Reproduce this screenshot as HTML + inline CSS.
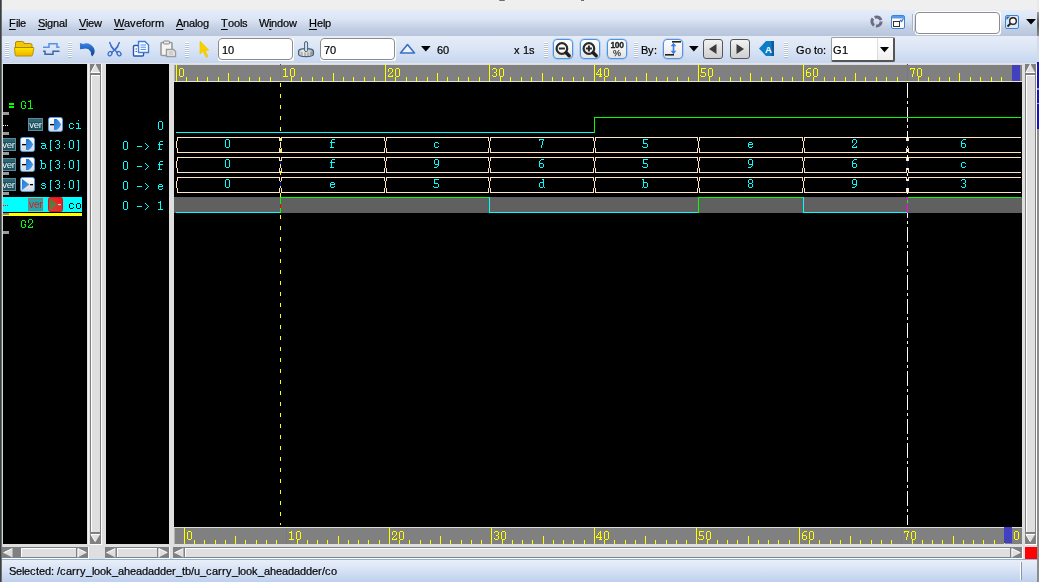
<!DOCTYPE html><html><head><meta charset="utf-8"><title>wave</title><style>
*{margin:0;padding:0;box-sizing:border-box}
html,body{width:1039px;height:582px;overflow:hidden;background:#efefef}
body{position:relative;font-family:"Liberation Sans",sans-serif;font-size:11px;color:#000}
.a{position:absolute}
.fx{will-change:transform;font-family:"Liberation Mono",monospace;font-size:14px;line-height:13px;white-space:pre;transform:scaleX(.8333);transform-origin:0 0}
.t{will-change:transform;position:absolute;white-space:pre;font-size:11px;line-height:13px;font-kerning:none;-webkit-text-stroke:0.2px #000}
.t i{display:inline-block;font-style:normal;overflow:visible}
.w2{width:2px}.w3{width:3px}.w4{width:4px}.w5{width:5px}.w6{width:6px}.w7{width:7px}.w8{width:8px}.w9{width:9px}.w10{width:10px}
.u{text-decoration:underline;text-underline-offset:2px}
.grip{position:absolute;width:4px;height:16px;background:repeating-linear-gradient(to bottom,#fff 0,#fff 1px,rgba(150,165,190,.55) 1px,rgba(150,165,190,.55) 2px)}
.inp{position:absolute;background:#fff;border:1px solid #9a9a9a;border-radius:3px;box-shadow:inset 1px 1px 0 #d0d0d0}
.btn{position:absolute;border:1px solid #4a94e4;border-radius:4px;background:linear-gradient(#ffffff,#f4f4f4 45%,#e4e4e4);box-shadow:0 0 0 0.5px rgba(74,148,228,.5)}
.gbtn{position:absolute;border:1px solid #555;border-radius:3px;background:linear-gradient(#f2f2f2,#cfcfcf)}
</style></head><body>
<div class="a" style="left:0;top:0;width:1039px;height:10px;background:#efefef"></div>
<div class="a" style="left:0;top:10px;width:1039px;height:26px;background:linear-gradient(#e4ecfa 0%,#dce5f5 35%,#c3cfe3 70%,#b7c5dc 100%)"></div>
<div class="a" style="left:0;top:36px;width:1039px;height:27px;background:linear-gradient(#e6edf8 0%,#dbe5f5 45%,#c6d6f0 100%)"></div>
<div class="a" style="left:0;top:63px;width:1039px;height:1px;background:#e4e4e4"></div>
<div class="a" style="left:0;top:64px;width:1039px;height:495px;background:#dfdfdf"></div>
<div class="a" style="left:0;top:559px;width:1039px;height:23px;background:linear-gradient(#e8eff9 0%,#d5e1f4 50%,#bdd0ee 100%);border-top:1px solid #8fb0e0"></div>
<div class="a" style="left:0;top:0;width:1px;height:582px;background:#3a3f3f"></div><div class="a" style="left:1px;top:0;width:1px;height:582px;background:#6a6f6f"></div>
<div class="a" style="left:2px;top:64px;width:1px;height:495px;background:#d6d6d6"></div>
<div class="a" style="left:88px;top:64px;width:1px;height:481px;background:#f2f2f2"></div>
<div class="a" style="left:1037px;top:0;width:2px;height:582px;background:#8c8c8c"></div>
<div class="a" style="left:1037px;top:0;width:2px;height:12px;background:#e8e8e8"></div><div class="a" style="left:1037px;top:12px;width:2px;height:24px;background:linear-gradient(#9c9c9c,#5a5a5a 50%,#8a8a8a)"></div>
<div class="a" style="left:1037px;top:36px;width:2px;height:27px;background:#d0dcee"></div>
<div class="a" style="left:1037px;top:62px;width:2px;height:67px;background:#1212c0"></div><div class="a" style="left:1037px;top:88px;width:2px;height:2px;background:#9090e8"></div><div class="a" style="left:1037px;top:103px;width:2px;height:1px;background:#9090e8"></div>
<div class="a" style="left:3px;top:64px;width:84px;height:480px;background:#000"></div>
<div class="a" style="left:106px;top:64px;width:63px;height:480px;background:#000"></div>
<div class="a" style="left:174px;top:64px;width:848px;height:480px;background:#000"></div>
<div class="a" style="left:90px;top:64px;width:11px;height:480px;background:#808080"></div>
<div class="a" style="left:101px;top:64px;width:1px;height:481px;background:#fff"></div>
<div class="a" style="left:90px;top:544px;width:12px;height:1px;background:#fff"></div>
<svg class="a" style="left:90px;top:64px" width="11" height="9"><path d="M5.5 0 L10.3 9 L0.7 9 Z" fill="#dfdfdf"/><path d="M5.5 0 L0.9 8.6 L10 8.6" stroke="#fff" stroke-width="1" fill="none"/></svg>
<svg class="a" style="left:90px;top:534px" width="11" height="8"><path d="M0.7 0 L10.3 0 L5.5 8 Z" fill="#dfdfdf"/><path d="M10 0.5 L1 0.5 L5.2 7.6" stroke="#fff" stroke-width="1" fill="none"/></svg>
<div class="a" style="left:91px;top:75px;width:9px;height:457px;background:#dfdfdf;border-left:1px solid #fff;border-top:1px solid #fff"></div>
<div class="a" style="left:1025px;top:64px;width:11px;height:480px;background:#808080"></div>
<div class="a" style="left:1036px;top:64px;width:1px;height:481px;background:#fff"></div>
<div class="a" style="left:1025px;top:544px;width:12px;height:1px;background:#fff"></div>
<svg class="a" style="left:1025px;top:64px" width="11" height="9"><path d="M5.5 0 L10.3 9 L0.7 9 Z" fill="#dfdfdf"/><path d="M5.5 0 L0.9 8.6 L10 8.6" stroke="#fff" stroke-width="1" fill="none"/></svg>
<svg class="a" style="left:1025px;top:534px" width="11" height="8"><path d="M0.7 0 L10.3 0 L5.5 8 Z" fill="#dfdfdf"/><path d="M10 0.5 L1 0.5 L5.2 7.6" stroke="#fff" stroke-width="1" fill="none"/></svg>
<div class="a" style="left:1026px;top:75px;width:9px;height:457px;background:#dfdfdf;border-left:1px solid #fff;border-top:1px solid #fff"></div>
<div class="a" style="left:2px;top:547px;width:86px;height:11px;background:#808080"></div>
<div class="a" style="left:2px;top:558px;width:87px;height:1px;background:#fff"></div>
<div class="a" style="left:88px;top:547px;width:1px;height:11px;background:#fff"></div>
<svg class="a" style="left:3px;top:548px" width="10" height="10"><path d="M0.3 4.8 L9.5 0.2 L9.5 9.5 Z" fill="#dfdfdf"/><path d="M0.5 4.8 L9.2 0.6" stroke="#fff" stroke-width="1" fill="none"/></svg>
<svg class="a" style="left:77px;top:548px" width="10" height="10"><path d="M0.5 0.2 L9.7 4.8 L0.5 9.5 Z" fill="#dfdfdf"/><path d="M9.2 4.6 L1 0.6 L1 9.3" stroke="#fff" stroke-width="1" fill="none"/></svg>
<div class="a" style="left:21px;top:548px;width:55px;height:9px;background:#dfdfdf;border-left:1px solid #fff;border-top:1px solid #fff"></div>
<div class="a" style="left:105px;top:547px;width:64px;height:11px;background:#808080"></div>
<div class="a" style="left:105px;top:558px;width:65px;height:1px;background:#fff"></div>
<div class="a" style="left:169px;top:547px;width:1px;height:11px;background:#fff"></div>
<svg class="a" style="left:106px;top:548px" width="10" height="10"><path d="M0.3 4.8 L9.5 0.2 L9.5 9.5 Z" fill="#dfdfdf"/><path d="M0.5 4.8 L9.2 0.6" stroke="#fff" stroke-width="1" fill="none"/></svg>
<svg class="a" style="left:158px;top:548px" width="10" height="10"><path d="M0.5 0.2 L9.7 4.8 L0.5 9.5 Z" fill="#dfdfdf"/><path d="M9.2 4.6 L1 0.6 L1 9.3" stroke="#fff" stroke-width="1" fill="none"/></svg>
<div class="a" style="left:117px;top:548px;width:40px;height:9px;background:#dfdfdf;border-left:1px solid #fff;border-top:1px solid #fff"></div>
<div class="a" style="left:173px;top:547px;width:849px;height:11px;background:#808080"></div>
<div class="a" style="left:173px;top:558px;width:850px;height:1px;background:#fff"></div>
<div class="a" style="left:1022px;top:547px;width:1px;height:11px;background:#fff"></div>
<svg class="a" style="left:174px;top:548px" width="10" height="10"><path d="M0.3 4.8 L9.5 0.2 L9.5 9.5 Z" fill="#dfdfdf"/><path d="M0.5 4.8 L9.2 0.6" stroke="#fff" stroke-width="1" fill="none"/></svg>
<svg class="a" style="left:1011px;top:548px" width="10" height="10"><path d="M0.5 0.2 L9.7 4.8 L0.5 9.5 Z" fill="#dfdfdf"/><path d="M9.2 4.6 L1 0.6 L1 9.3" stroke="#fff" stroke-width="1" fill="none"/></svg>
<div class="a" style="left:185px;top:548px;width:825px;height:9px;background:#dfdfdf;border-left:1px solid #fff;border-top:1px solid #fff"></div>
<div class="a" style="left:1025px;top:547px;width:12px;height:12px;background:#ff0000"></div>
<svg class="a" style="left:0;top:0" width="1039" height="582" shape-rendering="crispEdges"><rect x="174" y="64" width="848" height="1" fill="#dcdcdc"/><rect x="175" y="65" width="847" height="16" fill="#808080"/><rect x="174" y="65" width="1" height="16" fill="#b0b0b0"/><rect x="174" y="81" width="848" height="1" fill="#e0e0e0"/><rect x="174" y="527" width="848" height="1" fill="#dcdcdc"/><rect x="175" y="528" width="847" height="16" fill="#808080"/><rect x="174" y="528" width="1" height="16" fill="#b0b0b0"/><rect x="174" y="544" width="848" height="1" fill="#e0e0e0"/><rect x="176" y="64" width="1" height="18" fill="#ffff00"/><rect x="186" y="77" width="1" height="5" fill="#ffff00"/><rect x="197" y="77" width="1" height="5" fill="#ffff00"/><rect x="207" y="77" width="1" height="5" fill="#ffff00"/><rect x="218" y="77" width="1" height="5" fill="#ffff00"/><rect x="228" y="73" width="1" height="9" fill="#ffff00"/><rect x="238" y="77" width="1" height="5" fill="#ffff00"/><rect x="249" y="77" width="1" height="5" fill="#ffff00"/><rect x="259" y="77" width="1" height="5" fill="#ffff00"/><rect x="270" y="77" width="1" height="5" fill="#ffff00"/><rect x="280" y="64" width="1" height="1" fill="#505050"/><rect x="280" y="65" width="1" height="16" fill="#797979"/><rect x="280" y="81" width="1" height="1" fill="#ffff00"/><rect x="291" y="77" width="1" height="5" fill="#ffff00"/><rect x="301" y="77" width="1" height="5" fill="#ffff00"/><rect x="312" y="77" width="1" height="5" fill="#ffff00"/><rect x="322" y="77" width="1" height="5" fill="#ffff00"/><rect x="333" y="73" width="1" height="9" fill="#ffff00"/><rect x="343" y="77" width="1" height="5" fill="#ffff00"/><rect x="353" y="77" width="1" height="5" fill="#ffff00"/><rect x="364" y="77" width="1" height="5" fill="#ffff00"/><rect x="374" y="77" width="1" height="5" fill="#ffff00"/><rect x="385" y="64" width="1" height="18" fill="#ffff00"/><rect x="395" y="77" width="1" height="5" fill="#ffff00"/><rect x="406" y="77" width="1" height="5" fill="#ffff00"/><rect x="416" y="77" width="1" height="5" fill="#ffff00"/><rect x="427" y="77" width="1" height="5" fill="#ffff00"/><rect x="437" y="73" width="1" height="9" fill="#ffff00"/><rect x="447" y="77" width="1" height="5" fill="#ffff00"/><rect x="458" y="77" width="1" height="5" fill="#ffff00"/><rect x="468" y="77" width="1" height="5" fill="#ffff00"/><rect x="479" y="77" width="1" height="5" fill="#ffff00"/><rect x="489" y="64" width="1" height="18" fill="#ffff00"/><rect x="500" y="77" width="1" height="5" fill="#ffff00"/><rect x="510" y="77" width="1" height="5" fill="#ffff00"/><rect x="521" y="77" width="1" height="5" fill="#ffff00"/><rect x="531" y="77" width="1" height="5" fill="#ffff00"/><rect x="542" y="73" width="1" height="9" fill="#ffff00"/><rect x="552" y="77" width="1" height="5" fill="#ffff00"/><rect x="562" y="77" width="1" height="5" fill="#ffff00"/><rect x="573" y="77" width="1" height="5" fill="#ffff00"/><rect x="583" y="77" width="1" height="5" fill="#ffff00"/><rect x="594" y="64" width="1" height="18" fill="#ffff00"/><rect x="604" y="77" width="1" height="5" fill="#ffff00"/><rect x="615" y="77" width="1" height="5" fill="#ffff00"/><rect x="625" y="77" width="1" height="5" fill="#ffff00"/><rect x="636" y="77" width="1" height="5" fill="#ffff00"/><rect x="646" y="73" width="1" height="9" fill="#ffff00"/><rect x="656" y="77" width="1" height="5" fill="#ffff00"/><rect x="667" y="77" width="1" height="5" fill="#ffff00"/><rect x="677" y="77" width="1" height="5" fill="#ffff00"/><rect x="688" y="77" width="1" height="5" fill="#ffff00"/><rect x="698" y="64" width="1" height="18" fill="#ffff00"/><rect x="709" y="77" width="1" height="5" fill="#ffff00"/><rect x="719" y="77" width="1" height="5" fill="#ffff00"/><rect x="730" y="77" width="1" height="5" fill="#ffff00"/><rect x="740" y="77" width="1" height="5" fill="#ffff00"/><rect x="750" y="73" width="1" height="9" fill="#ffff00"/><rect x="761" y="77" width="1" height="5" fill="#ffff00"/><rect x="771" y="77" width="1" height="5" fill="#ffff00"/><rect x="782" y="77" width="1" height="5" fill="#ffff00"/><rect x="792" y="77" width="1" height="5" fill="#ffff00"/><rect x="803" y="64" width="1" height="18" fill="#ffff00"/><rect x="813" y="77" width="1" height="5" fill="#ffff00"/><rect x="824" y="77" width="1" height="5" fill="#ffff00"/><rect x="834" y="77" width="1" height="5" fill="#ffff00"/><rect x="845" y="77" width="1" height="5" fill="#ffff00"/><rect x="855" y="73" width="1" height="9" fill="#ffff00"/><rect x="865" y="77" width="1" height="5" fill="#ffff00"/><rect x="876" y="77" width="1" height="5" fill="#ffff00"/><rect x="886" y="77" width="1" height="5" fill="#ffff00"/><rect x="897" y="77" width="1" height="5" fill="#ffff00"/><rect x="907" y="64" width="1" height="1" fill="#505050"/><rect x="907" y="65" width="1" height="16" fill="#797979"/><rect x="907" y="81" width="1" height="1" fill="#ffff00"/><rect x="918" y="77" width="1" height="5" fill="#ffff00"/><rect x="928" y="77" width="1" height="5" fill="#ffff00"/><rect x="939" y="77" width="1" height="5" fill="#ffff00"/><rect x="949" y="77" width="1" height="5" fill="#ffff00"/><rect x="959" y="73" width="1" height="9" fill="#ffff00"/><rect x="970" y="77" width="1" height="5" fill="#ffff00"/><rect x="980" y="77" width="1" height="5" fill="#ffff00"/><rect x="991" y="77" width="1" height="5" fill="#ffff00"/><rect x="1001" y="77" width="1" height="5" fill="#ffff00"/><rect x="184" y="527" width="1" height="17" fill="#ffff00"/><rect x="194" y="540" width="1" height="4" fill="#ffff00"/><rect x="204" y="540" width="1" height="4" fill="#ffff00"/><rect x="215" y="540" width="1" height="4" fill="#ffff00"/><rect x="225" y="540" width="1" height="4" fill="#ffff00"/><rect x="235" y="536" width="1" height="8" fill="#ffff00"/><rect x="245" y="540" width="1" height="4" fill="#ffff00"/><rect x="256" y="540" width="1" height="4" fill="#ffff00"/><rect x="266" y="540" width="1" height="4" fill="#ffff00"/><rect x="276" y="540" width="1" height="4" fill="#ffff00"/><rect x="286" y="527" width="1" height="1" fill="#ffff00"/><rect x="286" y="528" width="1" height="16" fill="#7a7a7a"/><rect x="297" y="540" width="1" height="4" fill="#ffff00"/><rect x="307" y="540" width="1" height="4" fill="#ffff00"/><rect x="317" y="540" width="1" height="4" fill="#ffff00"/><rect x="327" y="540" width="1" height="4" fill="#ffff00"/><rect x="338" y="536" width="1" height="8" fill="#ffff00"/><rect x="348" y="540" width="1" height="4" fill="#ffff00"/><rect x="358" y="540" width="1" height="4" fill="#ffff00"/><rect x="368" y="540" width="1" height="4" fill="#ffff00"/><rect x="379" y="540" width="1" height="4" fill="#ffff00"/><rect x="389" y="527" width="1" height="17" fill="#ffff00"/><rect x="399" y="540" width="1" height="4" fill="#ffff00"/><rect x="409" y="540" width="1" height="4" fill="#ffff00"/><rect x="420" y="540" width="1" height="4" fill="#ffff00"/><rect x="430" y="540" width="1" height="4" fill="#ffff00"/><rect x="440" y="536" width="1" height="8" fill="#ffff00"/><rect x="450" y="540" width="1" height="4" fill="#ffff00"/><rect x="461" y="540" width="1" height="4" fill="#ffff00"/><rect x="471" y="540" width="1" height="4" fill="#ffff00"/><rect x="481" y="540" width="1" height="4" fill="#ffff00"/><rect x="491" y="527" width="1" height="17" fill="#ffff00"/><rect x="502" y="540" width="1" height="4" fill="#ffff00"/><rect x="512" y="540" width="1" height="4" fill="#ffff00"/><rect x="522" y="540" width="1" height="4" fill="#ffff00"/><rect x="532" y="540" width="1" height="4" fill="#ffff00"/><rect x="543" y="536" width="1" height="8" fill="#ffff00"/><rect x="553" y="540" width="1" height="4" fill="#ffff00"/><rect x="563" y="540" width="1" height="4" fill="#ffff00"/><rect x="573" y="540" width="1" height="4" fill="#ffff00"/><rect x="584" y="540" width="1" height="4" fill="#ffff00"/><rect x="594" y="527" width="1" height="17" fill="#ffff00"/><rect x="604" y="540" width="1" height="4" fill="#ffff00"/><rect x="614" y="540" width="1" height="4" fill="#ffff00"/><rect x="625" y="540" width="1" height="4" fill="#ffff00"/><rect x="635" y="540" width="1" height="4" fill="#ffff00"/><rect x="645" y="536" width="1" height="8" fill="#ffff00"/><rect x="655" y="540" width="1" height="4" fill="#ffff00"/><rect x="666" y="540" width="1" height="4" fill="#ffff00"/><rect x="676" y="540" width="1" height="4" fill="#ffff00"/><rect x="686" y="540" width="1" height="4" fill="#ffff00"/><rect x="696" y="527" width="1" height="17" fill="#ffff00"/><rect x="707" y="540" width="1" height="4" fill="#ffff00"/><rect x="717" y="540" width="1" height="4" fill="#ffff00"/><rect x="727" y="540" width="1" height="4" fill="#ffff00"/><rect x="737" y="540" width="1" height="4" fill="#ffff00"/><rect x="748" y="536" width="1" height="8" fill="#ffff00"/><rect x="758" y="540" width="1" height="4" fill="#ffff00"/><rect x="768" y="540" width="1" height="4" fill="#ffff00"/><rect x="778" y="540" width="1" height="4" fill="#ffff00"/><rect x="789" y="540" width="1" height="4" fill="#ffff00"/><rect x="799" y="527" width="1" height="17" fill="#ffff00"/><rect x="809" y="540" width="1" height="4" fill="#ffff00"/><rect x="819" y="540" width="1" height="4" fill="#ffff00"/><rect x="830" y="540" width="1" height="4" fill="#ffff00"/><rect x="840" y="540" width="1" height="4" fill="#ffff00"/><rect x="850" y="536" width="1" height="8" fill="#ffff00"/><rect x="860" y="540" width="1" height="4" fill="#ffff00"/><rect x="871" y="540" width="1" height="4" fill="#ffff00"/><rect x="881" y="540" width="1" height="4" fill="#ffff00"/><rect x="891" y="540" width="1" height="4" fill="#ffff00"/><rect x="901" y="527" width="1" height="1" fill="#ffff00"/><rect x="901" y="528" width="1" height="16" fill="#7a7a7a"/><rect x="912" y="540" width="1" height="4" fill="#ffff00"/><rect x="922" y="540" width="1" height="4" fill="#ffff00"/><rect x="932" y="540" width="1" height="4" fill="#ffff00"/><rect x="942" y="540" width="1" height="4" fill="#ffff00"/><rect x="953" y="536" width="1" height="8" fill="#ffff00"/><rect x="963" y="540" width="1" height="4" fill="#ffff00"/><rect x="973" y="540" width="1" height="4" fill="#ffff00"/><rect x="983" y="540" width="1" height="4" fill="#ffff00"/><rect x="994" y="540" width="1" height="4" fill="#ffff00"/><rect x="1012" y="65" width="8" height="16" fill="#4040c0"/><rect x="1012" y="64" width="1" height="1" fill="#ffff00"/><rect x="1012" y="81" width="1" height="1" fill="#ffff00"/><rect x="1004" y="527" width="8" height="16" fill="#4040c0"/><rect x="1004" y="543" width="1" height="1" fill="#ffff00"/><rect x="174" y="197" width="848" height="16" fill="#606060"/><rect x="176" y="132" width="419" height="1" fill="#00ffff"/><rect x="594" y="117" width="1" height="16" fill="#00ff00"/><rect x="594" y="117" width="427" height="1" fill="#00ff00"/><rect x="176" y="212" width="105" height="1" fill="#00ffff"/><rect x="280" y="197" width="210" height="1" fill="#00ff00"/><rect x="280" y="197" width="1" height="16" fill="#00ff00"/><rect x="489" y="212" width="210" height="1" fill="#00ffff"/><rect x="489" y="197" width="1" height="16" fill="#00ffff"/><rect x="698" y="197" width="106" height="1" fill="#00ff00"/><rect x="698" y="197" width="1" height="16" fill="#00ff00"/><rect x="803" y="212" width="105" height="1" fill="#00ffff"/><rect x="803" y="197" width="1" height="16" fill="#00ffff"/><rect x="907" y="197" width="114" height="1" fill="#00ff00"/><rect x="907" y="197" width="1" height="16" fill="#00ff00"/><rect x="176" y="141" width="1" height="7" fill="#ffe4c4"/><rect x="177" y="137" width="1" height="4" fill="#ffe4c4"/><rect x="177" y="148" width="1" height="5" fill="#ffe4c4"/><rect x="177" y="137" width="103" height="1" fill="#ffe4c4"/><rect x="177" y="152" width="103" height="1" fill="#ffe4c4"/><rect x="279" y="137" width="1" height="4" fill="#ffe4c4"/><rect x="279" y="148" width="1" height="5" fill="#ffe4c4"/><rect x="280" y="141" width="1" height="7" fill="#ffe4c4"/><rect x="281" y="137" width="1" height="4" fill="#ffe4c4"/><rect x="281" y="148" width="1" height="5" fill="#ffe4c4"/><rect x="281" y="137" width="104" height="1" fill="#ffe4c4"/><rect x="281" y="152" width="104" height="1" fill="#ffe4c4"/><rect x="384" y="137" width="1" height="4" fill="#ffe4c4"/><rect x="384" y="148" width="1" height="5" fill="#ffe4c4"/><rect x="385" y="141" width="1" height="7" fill="#ffe4c4"/><rect x="386" y="137" width="1" height="4" fill="#ffe4c4"/><rect x="386" y="148" width="1" height="5" fill="#ffe4c4"/><rect x="386" y="137" width="103" height="1" fill="#ffe4c4"/><rect x="386" y="152" width="103" height="1" fill="#ffe4c4"/><rect x="488" y="137" width="1" height="4" fill="#ffe4c4"/><rect x="488" y="148" width="1" height="5" fill="#ffe4c4"/><rect x="489" y="141" width="1" height="7" fill="#ffe4c4"/><rect x="490" y="137" width="1" height="4" fill="#ffe4c4"/><rect x="490" y="148" width="1" height="5" fill="#ffe4c4"/><rect x="490" y="137" width="104" height="1" fill="#ffe4c4"/><rect x="490" y="152" width="104" height="1" fill="#ffe4c4"/><rect x="593" y="137" width="1" height="4" fill="#ffe4c4"/><rect x="593" y="148" width="1" height="5" fill="#ffe4c4"/><rect x="594" y="141" width="1" height="7" fill="#ffe4c4"/><rect x="595" y="137" width="1" height="4" fill="#ffe4c4"/><rect x="595" y="148" width="1" height="5" fill="#ffe4c4"/><rect x="595" y="137" width="103" height="1" fill="#ffe4c4"/><rect x="595" y="152" width="103" height="1" fill="#ffe4c4"/><rect x="697" y="137" width="1" height="4" fill="#ffe4c4"/><rect x="697" y="148" width="1" height="5" fill="#ffe4c4"/><rect x="698" y="141" width="1" height="7" fill="#ffe4c4"/><rect x="699" y="137" width="1" height="4" fill="#ffe4c4"/><rect x="699" y="148" width="1" height="5" fill="#ffe4c4"/><rect x="699" y="137" width="104" height="1" fill="#ffe4c4"/><rect x="699" y="152" width="104" height="1" fill="#ffe4c4"/><rect x="802" y="137" width="1" height="4" fill="#ffe4c4"/><rect x="802" y="148" width="1" height="5" fill="#ffe4c4"/><rect x="803" y="141" width="1" height="7" fill="#ffe4c4"/><rect x="804" y="137" width="1" height="4" fill="#ffe4c4"/><rect x="804" y="148" width="1" height="5" fill="#ffe4c4"/><rect x="804" y="137" width="103" height="1" fill="#ffe4c4"/><rect x="804" y="152" width="103" height="1" fill="#ffe4c4"/><rect x="906" y="137" width="1" height="4" fill="#ffe4c4"/><rect x="906" y="148" width="1" height="5" fill="#ffe4c4"/><rect x="907" y="141" width="1" height="7" fill="#ffe4c4"/><rect x="908" y="137" width="1" height="4" fill="#ffe4c4"/><rect x="908" y="148" width="1" height="5" fill="#ffe4c4"/><rect x="908" y="137" width="113" height="1" fill="#ffe4c4"/><rect x="908" y="152" width="113" height="1" fill="#ffe4c4"/><rect x="176" y="161" width="1" height="7" fill="#ffe4c4"/><rect x="177" y="157" width="1" height="4" fill="#ffe4c4"/><rect x="177" y="168" width="1" height="5" fill="#ffe4c4"/><rect x="177" y="157" width="103" height="1" fill="#ffe4c4"/><rect x="177" y="172" width="103" height="1" fill="#ffe4c4"/><rect x="279" y="157" width="1" height="4" fill="#ffe4c4"/><rect x="279" y="168" width="1" height="5" fill="#ffe4c4"/><rect x="280" y="161" width="1" height="7" fill="#ffe4c4"/><rect x="281" y="157" width="1" height="4" fill="#ffe4c4"/><rect x="281" y="168" width="1" height="5" fill="#ffe4c4"/><rect x="281" y="157" width="104" height="1" fill="#ffe4c4"/><rect x="281" y="172" width="104" height="1" fill="#ffe4c4"/><rect x="384" y="157" width="1" height="4" fill="#ffe4c4"/><rect x="384" y="168" width="1" height="5" fill="#ffe4c4"/><rect x="385" y="161" width="1" height="7" fill="#ffe4c4"/><rect x="386" y="157" width="1" height="4" fill="#ffe4c4"/><rect x="386" y="168" width="1" height="5" fill="#ffe4c4"/><rect x="386" y="157" width="103" height="1" fill="#ffe4c4"/><rect x="386" y="172" width="103" height="1" fill="#ffe4c4"/><rect x="488" y="157" width="1" height="4" fill="#ffe4c4"/><rect x="488" y="168" width="1" height="5" fill="#ffe4c4"/><rect x="489" y="161" width="1" height="7" fill="#ffe4c4"/><rect x="490" y="157" width="1" height="4" fill="#ffe4c4"/><rect x="490" y="168" width="1" height="5" fill="#ffe4c4"/><rect x="490" y="157" width="104" height="1" fill="#ffe4c4"/><rect x="490" y="172" width="104" height="1" fill="#ffe4c4"/><rect x="593" y="157" width="1" height="4" fill="#ffe4c4"/><rect x="593" y="168" width="1" height="5" fill="#ffe4c4"/><rect x="594" y="161" width="1" height="7" fill="#ffe4c4"/><rect x="595" y="157" width="1" height="4" fill="#ffe4c4"/><rect x="595" y="168" width="1" height="5" fill="#ffe4c4"/><rect x="595" y="157" width="103" height="1" fill="#ffe4c4"/><rect x="595" y="172" width="103" height="1" fill="#ffe4c4"/><rect x="697" y="157" width="1" height="4" fill="#ffe4c4"/><rect x="697" y="168" width="1" height="5" fill="#ffe4c4"/><rect x="698" y="161" width="1" height="7" fill="#ffe4c4"/><rect x="699" y="157" width="1" height="4" fill="#ffe4c4"/><rect x="699" y="168" width="1" height="5" fill="#ffe4c4"/><rect x="699" y="157" width="104" height="1" fill="#ffe4c4"/><rect x="699" y="172" width="104" height="1" fill="#ffe4c4"/><rect x="802" y="157" width="1" height="4" fill="#ffe4c4"/><rect x="802" y="168" width="1" height="5" fill="#ffe4c4"/><rect x="803" y="161" width="1" height="7" fill="#ffe4c4"/><rect x="804" y="157" width="1" height="4" fill="#ffe4c4"/><rect x="804" y="168" width="1" height="5" fill="#ffe4c4"/><rect x="804" y="157" width="103" height="1" fill="#ffe4c4"/><rect x="804" y="172" width="103" height="1" fill="#ffe4c4"/><rect x="906" y="157" width="1" height="4" fill="#ffe4c4"/><rect x="906" y="168" width="1" height="5" fill="#ffe4c4"/><rect x="907" y="161" width="1" height="7" fill="#ffe4c4"/><rect x="908" y="157" width="1" height="4" fill="#ffe4c4"/><rect x="908" y="168" width="1" height="5" fill="#ffe4c4"/><rect x="908" y="157" width="113" height="1" fill="#ffe4c4"/><rect x="908" y="172" width="113" height="1" fill="#ffe4c4"/><rect x="176" y="181" width="1" height="7" fill="#ffe4c4"/><rect x="177" y="177" width="1" height="4" fill="#ffe4c4"/><rect x="177" y="188" width="1" height="5" fill="#ffe4c4"/><rect x="177" y="177" width="103" height="1" fill="#ffe4c4"/><rect x="177" y="192" width="103" height="1" fill="#ffe4c4"/><rect x="279" y="177" width="1" height="4" fill="#ffe4c4"/><rect x="279" y="188" width="1" height="5" fill="#ffe4c4"/><rect x="280" y="181" width="1" height="7" fill="#ffe4c4"/><rect x="281" y="177" width="1" height="4" fill="#ffe4c4"/><rect x="281" y="188" width="1" height="5" fill="#ffe4c4"/><rect x="281" y="177" width="104" height="1" fill="#ffe4c4"/><rect x="281" y="192" width="104" height="1" fill="#ffe4c4"/><rect x="384" y="177" width="1" height="4" fill="#ffe4c4"/><rect x="384" y="188" width="1" height="5" fill="#ffe4c4"/><rect x="385" y="181" width="1" height="7" fill="#ffe4c4"/><rect x="386" y="177" width="1" height="4" fill="#ffe4c4"/><rect x="386" y="188" width="1" height="5" fill="#ffe4c4"/><rect x="386" y="177" width="103" height="1" fill="#ffe4c4"/><rect x="386" y="192" width="103" height="1" fill="#ffe4c4"/><rect x="488" y="177" width="1" height="4" fill="#ffe4c4"/><rect x="488" y="188" width="1" height="5" fill="#ffe4c4"/><rect x="489" y="181" width="1" height="7" fill="#ffe4c4"/><rect x="490" y="177" width="1" height="4" fill="#ffe4c4"/><rect x="490" y="188" width="1" height="5" fill="#ffe4c4"/><rect x="490" y="177" width="104" height="1" fill="#ffe4c4"/><rect x="490" y="192" width="104" height="1" fill="#ffe4c4"/><rect x="593" y="177" width="1" height="4" fill="#ffe4c4"/><rect x="593" y="188" width="1" height="5" fill="#ffe4c4"/><rect x="594" y="181" width="1" height="7" fill="#ffe4c4"/><rect x="595" y="177" width="1" height="4" fill="#ffe4c4"/><rect x="595" y="188" width="1" height="5" fill="#ffe4c4"/><rect x="595" y="177" width="103" height="1" fill="#ffe4c4"/><rect x="595" y="192" width="103" height="1" fill="#ffe4c4"/><rect x="697" y="177" width="1" height="4" fill="#ffe4c4"/><rect x="697" y="188" width="1" height="5" fill="#ffe4c4"/><rect x="698" y="181" width="1" height="7" fill="#ffe4c4"/><rect x="699" y="177" width="1" height="4" fill="#ffe4c4"/><rect x="699" y="188" width="1" height="5" fill="#ffe4c4"/><rect x="699" y="177" width="104" height="1" fill="#ffe4c4"/><rect x="699" y="192" width="104" height="1" fill="#ffe4c4"/><rect x="802" y="177" width="1" height="4" fill="#ffe4c4"/><rect x="802" y="188" width="1" height="5" fill="#ffe4c4"/><rect x="803" y="181" width="1" height="7" fill="#ffe4c4"/><rect x="804" y="177" width="1" height="4" fill="#ffe4c4"/><rect x="804" y="188" width="1" height="5" fill="#ffe4c4"/><rect x="804" y="177" width="103" height="1" fill="#ffe4c4"/><rect x="804" y="192" width="103" height="1" fill="#ffe4c4"/><rect x="906" y="177" width="1" height="4" fill="#ffe4c4"/><rect x="906" y="188" width="1" height="5" fill="#ffe4c4"/><rect x="907" y="181" width="1" height="7" fill="#ffe4c4"/><rect x="908" y="177" width="1" height="4" fill="#ffe4c4"/><rect x="908" y="188" width="1" height="5" fill="#ffe4c4"/><rect x="908" y="177" width="113" height="1" fill="#ffe4c4"/><rect x="908" y="192" width="113" height="1" fill="#ffe4c4"/><rect x="280" y="83" width="1" height="4" fill="#ffff00"/><rect x="280" y="94" width="1" height="4" fill="#ffff00"/><rect x="280" y="105" width="1" height="4" fill="#ffff00"/><rect x="280" y="116" width="1" height="4" fill="#ffff00"/><rect x="280" y="127" width="1" height="4" fill="#ffff00"/><rect x="280" y="138" width="1" height="3" fill="#ffff00"/><rect x="280" y="141" width="1" height="1" fill="#001bc4"/><rect x="280" y="149" width="1" height="4" fill="#ffff00"/><rect x="280" y="160" width="1" height="1" fill="#ffff00"/><rect x="280" y="161" width="1" height="3" fill="#001bc4"/><rect x="280" y="171" width="1" height="4" fill="#ffff00"/><rect x="280" y="182" width="1" height="4" fill="#001bc4"/><rect x="280" y="193" width="1" height="4" fill="#ffff00"/><rect x="280" y="204" width="1" height="4" fill="#ff0000"/><rect x="280" y="215" width="1" height="4" fill="#ffff00"/><rect x="280" y="226" width="1" height="4" fill="#ffff00"/><rect x="280" y="237" width="1" height="4" fill="#ffff00"/><rect x="280" y="248" width="1" height="4" fill="#ffff00"/><rect x="280" y="259" width="1" height="4" fill="#ffff00"/><rect x="280" y="270" width="1" height="4" fill="#ffff00"/><rect x="280" y="281" width="1" height="4" fill="#ffff00"/><rect x="280" y="292" width="1" height="4" fill="#ffff00"/><rect x="280" y="303" width="1" height="4" fill="#ffff00"/><rect x="280" y="314" width="1" height="4" fill="#ffff00"/><rect x="280" y="325" width="1" height="4" fill="#ffff00"/><rect x="280" y="336" width="1" height="4" fill="#ffff00"/><rect x="280" y="347" width="1" height="4" fill="#ffff00"/><rect x="280" y="358" width="1" height="4" fill="#ffff00"/><rect x="280" y="369" width="1" height="4" fill="#ffff00"/><rect x="280" y="380" width="1" height="4" fill="#ffff00"/><rect x="280" y="391" width="1" height="4" fill="#ffff00"/><rect x="280" y="402" width="1" height="4" fill="#ffff00"/><rect x="280" y="413" width="1" height="4" fill="#ffff00"/><rect x="280" y="424" width="1" height="4" fill="#ffff00"/><rect x="280" y="435" width="1" height="4" fill="#ffff00"/><rect x="280" y="446" width="1" height="4" fill="#ffff00"/><rect x="280" y="457" width="1" height="4" fill="#ffff00"/><rect x="280" y="468" width="1" height="4" fill="#ffff00"/><rect x="280" y="479" width="1" height="4" fill="#ffff00"/><rect x="280" y="490" width="1" height="4" fill="#ffff00"/><rect x="280" y="501" width="1" height="4" fill="#ffff00"/><rect x="280" y="512" width="1" height="4" fill="#ffff00"/><rect x="280" y="523" width="1" height="2" fill="#ffff00"/><rect x="907" y="83" width="1" height="15" fill="#ffffff"/><rect x="907" y="101" width="1" height="3" fill="#ffffff"/><rect x="907" y="107" width="1" height="10" fill="#ffffff"/><rect x="907" y="117" width="1" height="1" fill="#ff00ff"/><rect x="907" y="118" width="1" height="4" fill="#ffffff"/><rect x="907" y="125" width="1" height="3" fill="#ffffff"/><rect x="907" y="131" width="1" height="10" fill="#ffffff"/><rect x="907" y="141" width="1" height="5" fill="#001b3b"/><rect x="907" y="149" width="1" height="3" fill="#ffffff"/><rect x="907" y="155" width="1" height="6" fill="#ffffff"/><rect x="907" y="161" width="1" height="7" fill="#001b3b"/><rect x="907" y="168" width="1" height="2" fill="#ffffff"/><rect x="907" y="173" width="1" height="3" fill="#ffffff"/><rect x="907" y="179" width="1" height="2" fill="#ffffff"/><rect x="907" y="181" width="1" height="7" fill="#001b3b"/><rect x="907" y="188" width="1" height="6" fill="#ffffff"/><rect x="907" y="197" width="1" height="3" fill="#ff00ff"/><rect x="907" y="203" width="1" height="10" fill="#ff00ff"/><rect x="907" y="213" width="1" height="5" fill="#ffffff"/><rect x="907" y="221" width="1" height="3" fill="#ffffff"/><rect x="907" y="227" width="1" height="15" fill="#ffffff"/><rect x="907" y="245" width="1" height="3" fill="#ffffff"/><rect x="907" y="251" width="1" height="15" fill="#ffffff"/><rect x="907" y="269" width="1" height="3" fill="#ffffff"/><rect x="907" y="275" width="1" height="15" fill="#ffffff"/><rect x="907" y="293" width="1" height="3" fill="#ffffff"/><rect x="907" y="299" width="1" height="15" fill="#ffffff"/><rect x="907" y="317" width="1" height="3" fill="#ffffff"/><rect x="907" y="323" width="1" height="15" fill="#ffffff"/><rect x="907" y="341" width="1" height="3" fill="#ffffff"/><rect x="907" y="347" width="1" height="15" fill="#ffffff"/><rect x="907" y="365" width="1" height="3" fill="#ffffff"/><rect x="907" y="371" width="1" height="15" fill="#ffffff"/><rect x="907" y="389" width="1" height="3" fill="#ffffff"/><rect x="907" y="395" width="1" height="15" fill="#ffffff"/><rect x="907" y="413" width="1" height="3" fill="#ffffff"/><rect x="907" y="419" width="1" height="15" fill="#ffffff"/><rect x="907" y="437" width="1" height="3" fill="#ffffff"/><rect x="907" y="443" width="1" height="15" fill="#ffffff"/><rect x="907" y="461" width="1" height="3" fill="#ffffff"/><rect x="907" y="467" width="1" height="15" fill="#ffffff"/><rect x="907" y="485" width="1" height="3" fill="#ffffff"/><rect x="907" y="491" width="1" height="15" fill="#ffffff"/><rect x="907" y="509" width="1" height="3" fill="#ffffff"/><rect x="907" y="515" width="1" height="10" fill="#ffffff"/></svg>
<div class="a" style="left:3px;top:64px;width:84px;height:480px;overflow:hidden">
<div class="a" style="left:0;top:133px;width:79px;height:15px;background:#00ffff"></div>
<div class="a" style="left:0;top:149px;width:79px;height:3px;background:#ffff00"></div>
<div class="a" style="left:0;top:48px;width:6px;height:3px;background:#9a9a9a"></div>
<div class="a" style="left:0;top:68px;width:6px;height:3px;background:#9a9a9a"></div>
<div class="a" style="left:0;top:88px;width:6px;height:3px;background:#9a9a9a"></div>
<div class="a" style="left:0;top:108px;width:6px;height:3px;background:#9a9a9a"></div>
<div class="a" style="left:0;top:128px;width:6px;height:3px;background:#9a9a9a"></div>
<div class="a" style="left:0;top:167px;width:6px;height:3px;background:#9a9a9a"></div>
<div class="a" style="left:0;top:149px;width:6px;height:2px;background:#8c8c96"></div>
<div class="a" style="left:0;top:61px;width:5px;height:1px;background:repeating-linear-gradient(to right,#fff 0,#fff 1px,#000 1px,#000 2px)"></div>
<div class="a" style="left:0;top:141px;width:5px;height:1px;background:repeating-linear-gradient(to right,#f00 0,#f00 1px,#00ffff 1px,#00ffff 2px)"></div>
<svg width="0" height="0" style="position:absolute"><defs><linearGradient id="wg" x1="0" y1="0" x2="0" y2="1"><stop offset="0" stop-color="#ffffff"/><stop offset="1" stop-color="#d8d8d8"/></linearGradient><linearGradient id="bg" x1="0" y1="0" x2="1" y2="1"><stop offset="0" stop-color="#2274d0"/><stop offset="1" stop-color="#4ea4f4"/></linearGradient><linearGradient id="rg" x1="1" y1="0" x2="0" y2="1"><stop offset="0" stop-color="#ff1010"/><stop offset="1" stop-color="#c84848"/></linearGradient><linearGradient id="gg" x1="0" y1="0" x2="1" y2="1"><stop offset="0" stop-color="#2e8c3c"/><stop offset="1" stop-color="#8a6a3a"/></linearGradient></defs></svg>
<div class="a" style="left:25px;top:54px;width:15px;height:13px;background:linear-gradient(#2c6675 0,#2c6675 3px,#1d5361 3px);border:1px solid #5c8a96;color:#eef4f4;font:9.6px/9px 'Liberation Sans',sans-serif;letter-spacing:-0.3px;text-align:center;padding-top:1px;will-change:transform">ver</div>
<svg class="a" style="left:45px;top:53px" width="15" height="15"><rect x="0.5" y="0.5" width="14" height="14" rx="2" fill="url(#wg)" stroke="#4c9cf2" stroke-opacity=".9"/><path d="M6 2 L8.6 2 Q11.8 4.2 13.2 7.5 Q11.8 10.8 8.6 13 L6 13 Z" fill="url(#bg)"/><rect x="2" y="7" width="4" height="1.3" fill="#000"/></svg>
<div class="a" style="left:-2px;top:74px;width:15px;height:13px;background:linear-gradient(#2c6675 0,#2c6675 3px,#1d5361 3px);border:1px solid #5c8a96;color:#eef4f4;font:9.6px/9px 'Liberation Sans',sans-serif;letter-spacing:-0.3px;text-align:center;padding-top:1px;will-change:transform">ver</div>
<svg class="a" style="left:17px;top:73px" width="15" height="15"><rect x="0.5" y="0.5" width="14" height="14" rx="2" fill="url(#wg)" stroke="#4c9cf2" stroke-opacity=".9"/><path d="M6 2 L8.6 2 Q11.8 4.2 13.2 7.5 Q11.8 10.8 8.6 13 L6 13 Z" fill="url(#bg)"/><rect x="2" y="7" width="4" height="1.3" fill="#000"/></svg>
<div class="a" style="left:-2px;top:94px;width:15px;height:13px;background:linear-gradient(#2c6675 0,#2c6675 3px,#1d5361 3px);border:1px solid #5c8a96;color:#eef4f4;font:9.6px/9px 'Liberation Sans',sans-serif;letter-spacing:-0.3px;text-align:center;padding-top:1px;will-change:transform">ver</div>
<svg class="a" style="left:17px;top:93px" width="15" height="15"><rect x="0.5" y="0.5" width="14" height="14" rx="2" fill="url(#wg)" stroke="#4c9cf2" stroke-opacity=".9"/><path d="M6 2 L8.6 2 Q11.8 4.2 13.2 7.5 Q11.8 10.8 8.6 13 L6 13 Z" fill="url(#bg)"/><rect x="2" y="7" width="4" height="1.3" fill="#000"/></svg>
<div class="a" style="left:-2px;top:114px;width:15px;height:13px;background:linear-gradient(#2c6675 0,#2c6675 3px,#1d5361 3px);border:1px solid #5c8a96;color:#eef4f4;font:9.6px/9px 'Liberation Sans',sans-serif;letter-spacing:-0.3px;text-align:center;padding-top:1px;will-change:transform">ver</div>
<svg class="a" style="left:17px;top:113px" width="15" height="15"><rect x="0.5" y="0.5" width="14" height="14" rx="2" fill="url(#wg)" stroke="#4c9cf2" stroke-opacity=".9"/><path d="M2 2 L9.5 7.5 L2 13 Z" fill="url(#bg)"/><rect x="10" y="7" width="3" height="1.3" fill="#000"/></svg>
<div class="a" style="left:25px;top:134px;width:15px;height:13px;background:#22a9ab;border:1px solid #a86c6c;color:#e01818;font:10px/9px 'Liberation Sans',sans-serif;letter-spacing:-0.1px;text-align:center;padding-top:1px;will-change:transform">ver</div>
<svg class="a" style="left:45px;top:133px" width="15" height="15"><rect x="0.5" y="0.5" width="14" height="14" rx="2" fill="url(#rg)" stroke="#c02020"/><path d="M2 2 L9.5 7.5 L2 13 Z" fill="url(#gg)"/><rect x="10" y="7" width="3" height="1.2" fill="#b0f0f0"/></svg>
</div>
<div class="t" style="left:9px;top:17px"><i class="w7 u">F</i><i class="w2">i</i><i class="w2">l</i><i class="w6">e</i></div>
<div class="t" style="left:38px;top:17px"><i class="w7 u">S</i><i class="w2">i</i><i class="w6">g</i><i class="w6">n</i><i class="w6">a</i><i class="w2">l</i></div>
<div class="t" style="left:79px;top:17px"><i class="w7 u">V</i><i class="w2">i</i><i class="w6">e</i><i class="w8">w</i></div>
<div class="t" style="left:114px;top:17px"><i class="w10 u">W</i><i class="w6">a</i><i class="w6">v</i><i class="w6">e</i><i class="w3">f</i><i class="w6">o</i><i class="w4">r</i><i class="w9">m</i></div>
<div class="t" style="left:176px;top:17px"><i class="w7 u">A</i><i class="w6">n</i><i class="w6">a</i><i class="w2">l</i><i class="w6">o</i><i class="w6">g</i></div>
<div class="t" style="left:221px;top:17px"><i class="w7 u">T</i><i class="w6">o</i><i class="w6">o</i><i class="w2">l</i><i class="w6">s</i></div>
<div class="t" style="left:259px;top:17px"><i class="w10">W</i><i class="w2 u">i</i><i class="w6">n</i><i class="w6">d</i><i class="w6">o</i><i class="w8">w</i></div>
<div class="t" style="left:309px;top:17px"><i class="w8 u">H</i><i class="w6">e</i><i class="w2">l</i><i class="w6">p</i></div>
<div class="a" style="left:499px;top:0;width:6px;height:1px;background:#6a7078;border-radius:0 0 2px 2px"></div>
<div class="a" style="left:581px;top:0;width:3px;height:1px;background:#6a7078"></div>
<svg class="a" style="left:869px;top:14px" width="15" height="15" viewBox="0 0 15 15"><circle cx="7.5" cy="7.5" r="4.6" fill="none" stroke="#6e6c84" stroke-width="3" stroke-dasharray="7.6 2" /></svg>
<svg class="a" style="left:891px;top:15px" width="14" height="14" viewBox="0 0 14 14"><rect x="0.5" y="0.5" width="13" height="13" rx="1.5" fill="#fff" stroke="#3a84d8"/><rect x="1" y="1" width="12" height="2.5" fill="#5a9ae8"/><rect x="2.5" y="6.5" width="6" height="5" fill="#fff" stroke="#333"/><path d="M9 5 L10.5 6.5 L12.5 3.5" stroke="#2a70d0" stroke-width="1.2" fill="none"/></svg>
<div class="a" style="left:912px;top:14px;width:1px;height:17px;background:#aab4c6"></div><div class="a" style="left:913px;top:14px;width:1px;height:17px;background:#f4f7fc"></div>
<div class="a" style="left:915px;top:11px;width:86px;height:24px;background:#fff;border-radius:3px"><div style="position:absolute;left:0;top:1px;width:85px;height:22px;border:1px solid #8c8c8c;border-radius:4px"></div></div>
<svg class="a" style="left:1005px;top:15px" width="14" height="14" viewBox="0 0 14 14"><rect x="0.5" y="0.5" width="13" height="13" rx="1.5" fill="#dbe8f8" stroke="#3a84d8"/><circle cx="8" cy="6" r="3.3" fill="#fff" stroke="#222" stroke-width="1.4"/><path d="M5.6 8.4 L2.5 11.5" stroke="#222" stroke-width="2"/><path d="M1.5 1.5 L5 1.5 L1.5 5 Z" fill="#2a5ca8"/></svg>
<svg class="a" style="left:1026px;top:19px" width="10" height="6"><path d="M0 0 L10 0 L5 5.5 Z" fill="#000"/></svg>
<div class="grip" style="left:5px;top:42px"></div>
<div class="grip" style="left:68px;top:42px"></div>
<div class="grip" style="left:185px;top:42px"></div>
<div class="grip" style="left:544px;top:42px"></div>
<div class="grip" style="left:634px;top:42px"></div>
<div class="grip" style="left:784px;top:42px"></div>
<svg class="a" style="left:13px;top:40px" width="22" height="18" viewBox="0 0 22 18"><defs><linearGradient id="fy" x1="0" y1="0" x2="0" y2="1"><stop offset="0" stop-color="#ffe800"/><stop offset="1" stop-color="#f0b000"/></linearGradient></defs><path d="M2.5 3 Q2.5 1.5 4 1.5 L9.5 1.5 Q11 1.5 11 3 L11 3.5 L17.5 3.5 Q19 3.5 19 5 L19 8 L2.5 8 Z" fill="#f4c800" stroke="#b08c00" stroke-width="1"/><path d="M1.5 7.5 L20.5 7.5 Q21 7.5 20.8 8.5 L19.5 15 Q19.3 16 18 16 L3.5 16 Q2.3 16 2.2 15 Z" fill="url(#fy)" stroke="#b89400" stroke-width="1"/><path d="M2 7.5 H20.5" stroke="#9c7c00" stroke-width="1" opacity=".55"/></svg>
<svg class="a" style="left:42px;top:42px" width="18" height="14" viewBox="0 0 18 14"><path d="M1 5.2 L7 5.2 L7 1.8 L15 1.8 L15 5.2 L17.5 5.2" fill="none" stroke="#5a8fe4" stroke-width="1.5"/><path d="M1 9.2 L3 9.2 L3 12.3 L11 12.3 L11 9.2 L17.5 9.2" fill="none" stroke="#3a68a8" stroke-width="1.5"/></svg>
<svg class="a" style="left:79px;top:42px" width="17" height="15" viewBox="0 0 17 15"><defs><linearGradient id="ub" x1="0" y1="0" x2="0" y2="1"><stop offset="0" stop-color="#3a84e8"/><stop offset="1" stop-color="#083c88"/></linearGradient></defs><path d="M0.9 1.1 L1.1 7.2 L6.9 6.6 Q10 6.7 11.5 9.5 Q12.4 11.5 12.1 12.8 L13.3 14.4 Q16.3 11.5 15.7 8.5 Q14.5 3.5 9.5 1.6 Q6.5 0.8 4.5 1.9 Z" fill="url(#ub)"/></svg>
<svg class="a" style="left:107px;top:41px" width="15" height="16" viewBox="0 0 15 16"><g fill="none" stroke="#3a6ec8" stroke-width="1.3"><path d="M2.5 1 Q4 6 8 9.5 L11 12"/><path d="M12.5 1 Q11 6 7 9.5 L4 12"/><ellipse cx="3" cy="12.6" rx="1.8" ry="2.3" transform="rotate(35 3 12.6)"/><ellipse cx="12" cy="12.6" rx="1.8" ry="2.3" transform="rotate(-35 12 12.6)"/></g><path d="M2 0.5 L4.2 5.5 L7.5 9 L6.5 9.8 Q3 6 2 0.5Z M13 0.5 L10.8 5.5 L7.5 9 L8.5 9.8 Q12 6 13 0.5Z" fill="#3a6ec8"/></svg>
<svg class="a" style="left:132px;top:40px" width="18" height="17" viewBox="0 0 18 17"><rect x="1.5" y="5.5" width="10" height="10.5" rx="1" fill="#fff" stroke="#2a58a8" stroke-width="1.4"/><path d="M6.5 1.5 L13 1.5 L16.5 5 L16.5 12.5 L6.5 12.5 Z" fill="#fff" stroke="#3a7ce0" stroke-width="1.4"/><path d="M8.5 5 H14 M8.5 7.2 H14 M8.5 9.4 H14" stroke="#4a8ae8" stroke-width="1"/><path d="M3.5 9 H5 M3.5 11.5 H5" stroke="#2a58a8" stroke-width="1"/></svg>
<svg class="a" style="left:159px;top:40px" width="18" height="18" viewBox="0 0 18 18"><rect x="2" y="2.5" width="11" height="13" rx="1" fill="#f4f4f4" stroke="#9a9a9a" stroke-width="1.6"/><rect x="4.5" y="1" width="6" height="3" rx="1" fill="#e8e8e8" stroke="#8a8a8a"/><path d="M7.5 9.5 L14.5 9.5 L16.5 11.5 L16.5 16.5 L7.5 16.5 Z" fill="#f4f4f4" stroke="#9a9a9a" stroke-width="1.4"/><path d="M9.5 12 H14.5 M9.5 14 H14.5" stroke="#aaa" stroke-width="1.2"/></svg>
<svg class="a" style="left:199px;top:40px" width="12" height="18" viewBox="0 0 12 18"><path d="M1 1 L1 14 L4 11.5 L7.3 17.5 L9 16.5 L6.3 11 L9.8 10 Z" fill="#f8d000" stroke="#f0c400" stroke-width="0.6"/></svg>
<div class="a" style="left:218px;top:38px;width:76px;height:23px;background:#fff;border-radius:2px"><div style="position:absolute;left:0;top:0;width:75px;height:22px;border:1px solid #8c8c8c;border-radius:4px"></div></div>
<div class="t" style="left:222px;top:44px"><i class="w6">1</i><i class="w6">0</i></div>
<div class="a" style="left:320px;top:38px;width:76px;height:23px;background:#fff;border-radius:2px"><div style="position:absolute;left:0;top:0;width:75px;height:22px;border:1px solid #8c8c8c;border-radius:4px"></div></div>
<div class="t" style="left:324px;top:44px"><i class="w6">7</i><i class="w6">0</i></div>
<svg class="a" style="left:297px;top:40px" width="18" height="18" viewBox="0 0 18 18"><defs><linearGradient id="mk" x1="0" y1="0" x2="1" y2="0"><stop offset="0" stop-color="#a8a8a8"/><stop offset=".25" stop-color="#ececec"/><stop offset=".7" stop-color="#d8d8d8"/><stop offset="1" stop-color="#8c8c8c"/></linearGradient></defs><path d="M1.5 11.2 Q1.5 8.6 9 8.6 Q16.5 8.6 16.5 11.2 L16.5 14 Q16.5 16.6 9 16.6 Q1.5 16.6 1.5 14 Z" fill="url(#mk)" stroke="#3f5f80" stroke-width="1.1"/><path d="M5 12 V16 M8 12.5 V16.3 M11 12.5 V16.3 M14 12 V16" stroke="#8a8a8a" stroke-width="1"/><rect x="7.6" y="1.6" width="3" height="10" rx="1.4" fill="#dde1e8" stroke="#41607f" stroke-width="1"/></svg>
<svg class="a" style="left:399px;top:43px" width="17" height="12" viewBox="0 0 17 12"><path d="M8.5 1.5 L15.5 10 L1.5 10 Z" fill="#eef3fb" stroke="#3a70c4" stroke-width="1.6" stroke-linejoin="round"/></svg>
<svg class="a" style="left:421px;top:46px" width="10" height="6"><path d="M0 0 L9.6 0 L4.8 5.4 Z" fill="#000"/></svg>
<div class="t" style="left:437px;top:44px"><i class="w6">6</i><i class="w6">0</i></div>
<div class="t" style="left:514px;top:44px"><i class="w6">x</i><i class="w3">&nbsp;</i><i class="w6">1</i><i class="w6">s</i></div>
<div class="btn" style="left:553px;top:39px;width:20px;height:20px"><svg style="position:absolute;left:-1px;top:-1px" width="20" height="20" viewBox="0 0 20 20"><circle cx="8.9" cy="9.5" r="5.3" fill="#fff" fill-opacity=".7" stroke="#2a2a2a" stroke-width="2.2"/><path d="M13.2 13.8 L16.2 16.8" stroke="#1e1e1e" stroke-width="3.4" stroke-linecap="round"/><path d="M5.9 9.5 H11.9" stroke="#2a2a2a" stroke-width="2"/></svg></div>
<div class="btn" style="left:580px;top:39px;width:20px;height:20px"><svg style="position:absolute;left:-1px;top:-1px" width="20" height="20" viewBox="0 0 20 20"><circle cx="8.9" cy="9.5" r="5.3" fill="#fff" fill-opacity=".7" stroke="#2a2a2a" stroke-width="2.2"/><path d="M13.2 13.8 L16.2 16.8" stroke="#1e1e1e" stroke-width="3.4" stroke-linecap="round"/><path d="M5.9 9.5 H11.9 M8.9 6.5 V12.5" stroke="#2a2a2a" stroke-width="2"/></svg></div>
<div class="btn" style="left:607px;top:39px;width:20px;height:20px;will-change:transform"><div style="position:absolute;left:-1px;top:1px;width:20px;text-align:center;font:bold 8.5px/8px 'Liberation Sans',sans-serif;letter-spacing:-0.35px;color:#222;-webkit-text-stroke:0.3px #222">100</div><div style="position:absolute;left:-1px;top:9px;width:20px;text-align:center;font:9px/8px 'Liberation Sans',sans-serif;color:#3a3a3a;-webkit-text-stroke:0.25px #3a3a3a">%</div></div>
<div class="t" style="left:641px;top:44px"><i class="w7">B</i><i class="w6">y</i><i class="w3">:</i></div>
<div class="btn" style="left:663px;top:39px;width:20px;height:20px;border-color:#5a8ee0"><svg style="position:absolute;left:0;top:0" width="18" height="18" viewBox="0 0 18 18"><rect x="8" y="1" width="9" height="1.6" fill="#222"/><rect x="1" y="14" width="9" height="1.6" fill="#222"/><path d="M9.5 4 V13" stroke="#3a80e8" stroke-width="1.6"/><path d="M6.6 6.2 L9.5 2.8 L12.4 6.2 Z M6.6 10.8 L9.5 14.2 L12.4 10.8 Z" fill="#3a80e8"/></svg></div>
<svg class="a" style="left:689px;top:46px" width="10" height="6"><path d="M0 0 L9.6 0 L4.8 5.4 Z" fill="#000"/></svg>
<div class="gbtn" style="left:703px;top:39px;width:20px;height:20px"><svg style="position:absolute;left:0;top:0" width="18" height="18"><path d="M12.5 4 L12.5 14 L5 9 Z" fill="#3c3c3c"/></svg></div>
<div class="gbtn" style="left:730px;top:39px;width:20px;height:20px"><svg style="position:absolute;left:0;top:0" width="18" height="18"><path d="M5.5 4 L5.5 14 L13 9 Z" fill="#3c3c3c"/></svg></div>
<svg class="a" style="left:758px;top:40px" width="17" height="18" viewBox="0 0 17 18"><path d="M1 8.5 L8 1 L16 1 L16 16 L8 16 Z" fill="#0b7cc6"/><path d="M16 1 L16 16 L13.5 16 L13.5 1Z" fill="#0a5ea0"/><text x="7" y="12.5" font-family="Liberation Sans" font-weight="bold" font-size="9.5" fill="#fff">A</text></svg>
<div class="t" style="left:796px;top:44px"><i class="w9">G</i><i class="w6">o</i><i class="w3">&nbsp;</i><i class="w3">t</i><i class="w6">o</i><i class="w3">:</i></div>
<div class="a" style="left:831px;top:37px;width:64px;height:25px;background:#fff;border:1px solid #a0a0a0;border-right:2px solid #555;border-bottom:2px solid #555;border-radius:2px"></div>
<div class="a" style="left:877px;top:38px;width:16px;height:22px;background:linear-gradient(#fff,#f0f0f0);border-left:1px solid #ddd"></div>
<svg class="a" style="left:880px;top:47px" width="10" height="6"><path d="M0 0 L9 0 L4.5 5.2 Z" fill="#000"/></svg>
<div class="t" style="left:833px;top:44px"><i class="w9">G</i><i class="w6">1</i></div>
<div class="t" style="left:9px;top:565px"><i class="w7">S</i><i class="w6">e</i><i class="w2">l</i><i class="w6">e</i><i class="w6">c</i><i class="w3">t</i><i class="w6">e</i><i class="w6">d</i><i class="w3">:</i><i class="w3">&nbsp;</i><i class="w3">/</i><i class="w6">c</i><i class="w6">a</i><i class="w4">r</i><i class="w4">r</i><i class="w6">y</i><i class="w6">_</i><i class="w2">l</i><i class="w6">o</i><i class="w6">o</i><i class="w6">k</i><i class="w6">_</i><i class="w6">a</i><i class="w6">h</i><i class="w6">e</i><i class="w6">a</i><i class="w6">d</i><i class="w6">a</i><i class="w6">d</i><i class="w6">d</i><i class="w6">e</i><i class="w4">r</i><i class="w6">_</i><i class="w3">t</i><i class="w6">b</i><i class="w3">/</i><i class="w6">u</i><i class="w6">_</i><i class="w6">c</i><i class="w6">a</i><i class="w4">r</i><i class="w4">r</i><i class="w6">y</i><i class="w6">_</i><i class="w2">l</i><i class="w6">o</i><i class="w6">o</i><i class="w6">k</i><i class="w6">_</i><i class="w6">a</i><i class="w6">h</i><i class="w6">e</i><i class="w6">a</i><i class="w6">d</i><i class="w6">a</i><i class="w6">d</i><i class="w6">d</i><i class="w6">e</i><i class="w4">r</i><i class="w3">/</i><i class="w6">c</i><i class="w6">o</i></div>
<div class="a" style="left:1020px;top:562px;width:1px;height:18px;background:#fff"></div><div class="a" style="left:1021px;top:562px;width:1px;height:18px;background:#8a94a8"></div>
<svg class="a" style="left:0;top:0" width="1039" height="582" shape-rendering="crispEdges"><path fill="#ffff00" d="M180 68h3v1h-3zM179 69h1v1h-1zM183 69h1v1h-1zM179 70h1v1h-1zM183 70h1v1h-1zM179 71h1v1h-1zM183 71h1v1h-1zM179 72h1v1h-1zM183 72h1v1h-1zM179 73h1v1h-1zM183 73h1v1h-1zM179 74h1v1h-1zM183 74h1v1h-1zM179 75h1v1h-1zM183 75h1v1h-1zM180 76h3v1h-3zM188 531h3v1h-3zM187 532h1v1h-1zM191 532h1v1h-1zM187 533h1v1h-1zM191 533h1v1h-1zM187 534h1v1h-1zM191 534h1v1h-1zM187 535h1v1h-1zM191 535h1v1h-1zM187 536h1v1h-1zM191 536h1v1h-1zM187 537h1v1h-1zM191 537h1v1h-1zM187 538h1v1h-1zM191 538h1v1h-1zM188 539h3v1h-3zM285 68h1v1h-1zM283 69h3v1h-3zM285 70h1v1h-1zM285 71h1v1h-1zM285 72h1v1h-1zM285 73h1v1h-1zM285 74h1v1h-1zM285 75h1v1h-1zM283 76h5v1h-5zM291 68h3v1h-3zM290 69h1v1h-1zM294 69h1v1h-1zM290 70h1v1h-1zM294 70h1v1h-1zM290 71h1v1h-1zM294 71h1v1h-1zM290 72h1v1h-1zM294 72h1v1h-1zM290 73h1v1h-1zM294 73h1v1h-1zM290 74h1v1h-1zM294 74h1v1h-1zM290 75h1v1h-1zM294 75h1v1h-1zM291 76h3v1h-3zM291 531h1v1h-1zM289 532h3v1h-3zM291 533h1v1h-1zM291 534h1v1h-1zM291 535h1v1h-1zM291 536h1v1h-1zM291 537h1v1h-1zM291 538h1v1h-1zM289 539h5v1h-5zM297 531h3v1h-3zM296 532h1v1h-1zM300 532h1v1h-1zM296 533h1v1h-1zM300 533h1v1h-1zM296 534h1v1h-1zM300 534h1v1h-1zM296 535h1v1h-1zM300 535h1v1h-1zM296 536h1v1h-1zM300 536h1v1h-1zM296 537h1v1h-1zM300 537h1v1h-1zM296 538h1v1h-1zM300 538h1v1h-1zM297 539h3v1h-3zM389 68h3v1h-3zM388 69h1v1h-1zM392 69h1v1h-1zM388 70h1v1h-1zM392 70h1v1h-1zM388 71h1v1h-1zM392 71h1v1h-1zM391 72h1v1h-1zM390 73h1v1h-1zM389 74h1v1h-1zM388 75h1v1h-1zM392 75h1v1h-1zM388 76h5v1h-5zM396 68h3v1h-3zM395 69h1v1h-1zM399 69h1v1h-1zM395 70h1v1h-1zM399 70h1v1h-1zM395 71h1v1h-1zM399 71h1v1h-1zM395 72h1v1h-1zM399 72h1v1h-1zM395 73h1v1h-1zM399 73h1v1h-1zM395 74h1v1h-1zM399 74h1v1h-1zM395 75h1v1h-1zM399 75h1v1h-1zM396 76h3v1h-3zM393 531h3v1h-3zM392 532h1v1h-1zM396 532h1v1h-1zM392 533h1v1h-1zM396 533h1v1h-1zM392 534h1v1h-1zM396 534h1v1h-1zM395 535h1v1h-1zM394 536h1v1h-1zM393 537h1v1h-1zM392 538h1v1h-1zM396 538h1v1h-1zM392 539h5v1h-5zM400 531h3v1h-3zM399 532h1v1h-1zM403 532h1v1h-1zM399 533h1v1h-1zM403 533h1v1h-1zM399 534h1v1h-1zM403 534h1v1h-1zM399 535h1v1h-1zM403 535h1v1h-1zM399 536h1v1h-1zM403 536h1v1h-1zM399 537h1v1h-1zM403 537h1v1h-1zM399 538h1v1h-1zM403 538h1v1h-1zM400 539h3v1h-3zM493 68h3v1h-3zM492 69h1v1h-1zM496 69h1v1h-1zM496 70h1v1h-1zM496 71h1v1h-1zM494 72h2v1h-2zM496 73h1v1h-1zM496 74h1v1h-1zM492 75h1v1h-1zM496 75h1v1h-1zM493 76h3v1h-3zM500 68h3v1h-3zM499 69h1v1h-1zM503 69h1v1h-1zM499 70h1v1h-1zM503 70h1v1h-1zM499 71h1v1h-1zM503 71h1v1h-1zM499 72h1v1h-1zM503 72h1v1h-1zM499 73h1v1h-1zM503 73h1v1h-1zM499 74h1v1h-1zM503 74h1v1h-1zM499 75h1v1h-1zM503 75h1v1h-1zM500 76h3v1h-3zM495 531h3v1h-3zM494 532h1v1h-1zM498 532h1v1h-1zM498 533h1v1h-1zM498 534h1v1h-1zM496 535h2v1h-2zM498 536h1v1h-1zM498 537h1v1h-1zM494 538h1v1h-1zM498 538h1v1h-1zM495 539h3v1h-3zM502 531h3v1h-3zM501 532h1v1h-1zM505 532h1v1h-1zM501 533h1v1h-1zM505 533h1v1h-1zM501 534h1v1h-1zM505 534h1v1h-1zM501 535h1v1h-1zM505 535h1v1h-1zM501 536h1v1h-1zM505 536h1v1h-1zM501 537h1v1h-1zM505 537h1v1h-1zM501 538h1v1h-1zM505 538h1v1h-1zM502 539h3v1h-3zM600 68h1v1h-1zM599 69h2v1h-2zM598 70h1v1h-1zM600 70h1v1h-1zM598 71h1v1h-1zM600 71h1v1h-1zM597 72h1v1h-1zM600 72h1v1h-1zM596 73h1v1h-1zM600 73h1v1h-1zM596 74h6v1h-6zM600 75h1v1h-1zM599 76h3v1h-3zM605 68h3v1h-3zM604 69h1v1h-1zM608 69h1v1h-1zM604 70h1v1h-1zM608 70h1v1h-1zM604 71h1v1h-1zM608 71h1v1h-1zM604 72h1v1h-1zM608 72h1v1h-1zM604 73h1v1h-1zM608 73h1v1h-1zM604 74h1v1h-1zM608 74h1v1h-1zM604 75h1v1h-1zM608 75h1v1h-1zM605 76h3v1h-3zM600 531h1v1h-1zM599 532h2v1h-2zM598 533h1v1h-1zM600 533h1v1h-1zM598 534h1v1h-1zM600 534h1v1h-1zM597 535h1v1h-1zM600 535h1v1h-1zM596 536h1v1h-1zM600 536h1v1h-1zM596 537h6v1h-6zM600 538h1v1h-1zM599 539h3v1h-3zM605 531h3v1h-3zM604 532h1v1h-1zM608 532h1v1h-1zM604 533h1v1h-1zM608 533h1v1h-1zM604 534h1v1h-1zM608 534h1v1h-1zM604 535h1v1h-1zM608 535h1v1h-1zM604 536h1v1h-1zM608 536h1v1h-1zM604 537h1v1h-1zM608 537h1v1h-1zM604 538h1v1h-1zM608 538h1v1h-1zM605 539h3v1h-3zM701 68h5v1h-5zM701 69h1v1h-1zM701 70h1v1h-1zM701 71h1v1h-1zM701 72h4v1h-4zM705 73h1v1h-1zM705 74h1v1h-1zM700 75h1v1h-1zM705 75h1v1h-1zM701 76h4v1h-4zM709 68h3v1h-3zM708 69h1v1h-1zM712 69h1v1h-1zM708 70h1v1h-1zM712 70h1v1h-1zM708 71h1v1h-1zM712 71h1v1h-1zM708 72h1v1h-1zM712 72h1v1h-1zM708 73h1v1h-1zM712 73h1v1h-1zM708 74h1v1h-1zM712 74h1v1h-1zM708 75h1v1h-1zM712 75h1v1h-1zM709 76h3v1h-3zM699 531h5v1h-5zM699 532h1v1h-1zM699 533h1v1h-1zM699 534h1v1h-1zM699 535h4v1h-4zM703 536h1v1h-1zM703 537h1v1h-1zM698 538h1v1h-1zM703 538h1v1h-1zM699 539h4v1h-4zM707 531h3v1h-3zM706 532h1v1h-1zM710 532h1v1h-1zM706 533h1v1h-1zM710 533h1v1h-1zM706 534h1v1h-1zM710 534h1v1h-1zM706 535h1v1h-1zM710 535h1v1h-1zM706 536h1v1h-1zM710 536h1v1h-1zM706 537h1v1h-1zM710 537h1v1h-1zM706 538h1v1h-1zM710 538h1v1h-1zM707 539h3v1h-3zM808 68h3v1h-3zM807 69h1v1h-1zM806 70h1v1h-1zM806 71h1v1h-1zM806 72h4v1h-4zM806 73h1v1h-1zM810 73h1v1h-1zM806 74h1v1h-1zM810 74h1v1h-1zM806 75h1v1h-1zM810 75h1v1h-1zM807 76h3v1h-3zM814 68h3v1h-3zM813 69h1v1h-1zM817 69h1v1h-1zM813 70h1v1h-1zM817 70h1v1h-1zM813 71h1v1h-1zM817 71h1v1h-1zM813 72h1v1h-1zM817 72h1v1h-1zM813 73h1v1h-1zM817 73h1v1h-1zM813 74h1v1h-1zM817 74h1v1h-1zM813 75h1v1h-1zM817 75h1v1h-1zM814 76h3v1h-3zM804 531h3v1h-3zM803 532h1v1h-1zM802 533h1v1h-1zM802 534h1v1h-1zM802 535h4v1h-4zM802 536h1v1h-1zM806 536h1v1h-1zM802 537h1v1h-1zM806 537h1v1h-1zM802 538h1v1h-1zM806 538h1v1h-1zM803 539h3v1h-3zM810 531h3v1h-3zM809 532h1v1h-1zM813 532h1v1h-1zM809 533h1v1h-1zM813 533h1v1h-1zM809 534h1v1h-1zM813 534h1v1h-1zM809 535h1v1h-1zM813 535h1v1h-1zM809 536h1v1h-1zM813 536h1v1h-1zM809 537h1v1h-1zM813 537h1v1h-1zM809 538h1v1h-1zM813 538h1v1h-1zM810 539h3v1h-3zM910 68h5v1h-5zM910 69h1v1h-1zM914 69h1v1h-1zM913 70h1v1h-1zM913 71h1v1h-1zM913 72h1v1h-1zM913 73h1v1h-1zM912 74h1v1h-1zM912 75h1v1h-1zM912 76h1v1h-1zM918 68h3v1h-3zM917 69h1v1h-1zM921 69h1v1h-1zM917 70h1v1h-1zM921 70h1v1h-1zM917 71h1v1h-1zM921 71h1v1h-1zM917 72h1v1h-1zM921 72h1v1h-1zM917 73h1v1h-1zM921 73h1v1h-1zM917 74h1v1h-1zM921 74h1v1h-1zM917 75h1v1h-1zM921 75h1v1h-1zM918 76h3v1h-3zM904 531h5v1h-5zM904 532h1v1h-1zM908 532h1v1h-1zM907 533h1v1h-1zM907 534h1v1h-1zM907 535h1v1h-1zM907 536h1v1h-1zM906 537h1v1h-1zM906 538h1v1h-1zM906 539h1v1h-1zM912 531h3v1h-3zM911 532h1v1h-1zM915 532h1v1h-1zM911 533h1v1h-1zM915 533h1v1h-1zM911 534h1v1h-1zM915 534h1v1h-1zM911 535h1v1h-1zM915 535h1v1h-1zM911 536h1v1h-1zM915 536h1v1h-1zM911 537h1v1h-1zM915 537h1v1h-1zM911 538h1v1h-1zM915 538h1v1h-1zM912 539h3v1h-3zM1015 531h3v1h-3zM1014 532h1v1h-1zM1018 532h1v1h-1zM1014 533h1v1h-1zM1018 533h1v1h-1zM1014 534h1v1h-1zM1018 534h1v1h-1zM1014 535h1v1h-1zM1018 535h1v1h-1zM1014 536h1v1h-1zM1018 536h1v1h-1zM1014 537h1v1h-1zM1018 537h1v1h-1zM1014 538h1v1h-1zM1018 538h1v1h-1zM1015 539h3v1h-3z"/><path fill="#00ffff" d="M226 139h3v1h-3zM225 140h1v1h-1zM229 140h1v1h-1zM225 141h1v1h-1zM229 141h1v1h-1zM225 142h1v1h-1zM229 142h1v1h-1zM225 143h1v1h-1zM229 143h1v1h-1zM225 144h1v1h-1zM229 144h1v1h-1zM225 145h1v1h-1zM229 145h1v1h-1zM225 146h1v1h-1zM229 146h1v1h-1zM226 147h3v1h-3zM332 139h3v1h-3zM331 140h1v1h-1zM331 141h1v1h-1zM330 142h5v1h-5zM331 143h1v1h-1zM331 144h1v1h-1zM331 145h1v1h-1zM331 146h1v1h-1zM330 147h4v1h-4zM435 142h3v1h-3zM434 143h1v1h-1zM438 143h1v1h-1zM434 144h1v1h-1zM434 145h1v1h-1zM434 146h1v1h-1zM438 146h1v1h-1zM435 147h3v1h-3zM539 139h5v1h-5zM539 140h1v1h-1zM543 140h1v1h-1zM542 141h1v1h-1zM542 142h1v1h-1zM542 143h1v1h-1zM542 144h1v1h-1zM541 145h1v1h-1zM541 146h1v1h-1zM541 147h1v1h-1zM643 139h5v1h-5zM643 140h1v1h-1zM643 141h1v1h-1zM643 142h1v1h-1zM643 143h4v1h-4zM647 144h1v1h-1zM647 145h1v1h-1zM642 146h1v1h-1zM647 146h1v1h-1zM643 147h4v1h-4zM749 142h3v1h-3zM748 143h1v1h-1zM752 143h1v1h-1zM748 144h5v1h-5zM748 145h1v1h-1zM748 146h1v1h-1zM752 146h1v1h-1zM749 147h3v1h-3zM853 139h3v1h-3zM852 140h1v1h-1zM856 140h1v1h-1zM852 141h1v1h-1zM856 141h1v1h-1zM852 142h1v1h-1zM856 142h1v1h-1zM855 143h1v1h-1zM854 144h1v1h-1zM853 145h1v1h-1zM852 146h1v1h-1zM856 146h1v1h-1zM852 147h5v1h-5zM963 139h3v1h-3zM962 140h1v1h-1zM961 141h1v1h-1zM961 142h1v1h-1zM961 143h4v1h-4zM961 144h1v1h-1zM965 144h1v1h-1zM961 145h1v1h-1zM965 145h1v1h-1zM961 146h1v1h-1zM965 146h1v1h-1zM962 147h3v1h-3zM226 159h3v1h-3zM225 160h1v1h-1zM229 160h1v1h-1zM225 161h1v1h-1zM229 161h1v1h-1zM225 162h1v1h-1zM229 162h1v1h-1zM225 163h1v1h-1zM229 163h1v1h-1zM225 164h1v1h-1zM229 164h1v1h-1zM225 165h1v1h-1zM229 165h1v1h-1zM225 166h1v1h-1zM229 166h1v1h-1zM226 167h3v1h-3zM332 159h3v1h-3zM331 160h1v1h-1zM331 161h1v1h-1zM330 162h5v1h-5zM331 163h1v1h-1zM331 164h1v1h-1zM331 165h1v1h-1zM331 166h1v1h-1zM330 167h4v1h-4zM435 159h3v1h-3zM434 160h1v1h-1zM438 160h1v1h-1zM434 161h1v1h-1zM438 161h1v1h-1zM434 162h1v1h-1zM438 162h1v1h-1zM434 163h1v1h-1zM438 163h1v1h-1zM435 164h4v1h-4zM438 165h1v1h-1zM437 166h1v1h-1zM434 167h3v1h-3zM541 159h3v1h-3zM540 160h1v1h-1zM539 161h1v1h-1zM539 162h1v1h-1zM539 163h4v1h-4zM539 164h1v1h-1zM543 164h1v1h-1zM539 165h1v1h-1zM543 165h1v1h-1zM539 166h1v1h-1zM543 166h1v1h-1zM540 167h3v1h-3zM643 159h5v1h-5zM643 160h1v1h-1zM643 161h1v1h-1zM643 162h1v1h-1zM643 163h4v1h-4zM647 164h1v1h-1zM647 165h1v1h-1zM642 166h1v1h-1zM647 166h1v1h-1zM643 167h4v1h-4zM749 159h3v1h-3zM748 160h1v1h-1zM752 160h1v1h-1zM748 161h1v1h-1zM752 161h1v1h-1zM748 162h1v1h-1zM752 162h1v1h-1zM748 163h1v1h-1zM752 163h1v1h-1zM749 164h4v1h-4zM752 165h1v1h-1zM751 166h1v1h-1zM748 167h3v1h-3zM854 159h3v1h-3zM853 160h1v1h-1zM852 161h1v1h-1zM852 162h1v1h-1zM852 163h4v1h-4zM852 164h1v1h-1zM856 164h1v1h-1zM852 165h1v1h-1zM856 165h1v1h-1zM852 166h1v1h-1zM856 166h1v1h-1zM853 167h3v1h-3zM962 162h3v1h-3zM961 163h1v1h-1zM965 163h1v1h-1zM961 164h1v1h-1zM961 165h1v1h-1zM961 166h1v1h-1zM965 166h1v1h-1zM962 167h3v1h-3zM226 179h3v1h-3zM225 180h1v1h-1zM229 180h1v1h-1zM225 181h1v1h-1zM229 181h1v1h-1zM225 182h1v1h-1zM229 182h1v1h-1zM225 183h1v1h-1zM229 183h1v1h-1zM225 184h1v1h-1zM229 184h1v1h-1zM225 185h1v1h-1zM229 185h1v1h-1zM225 186h1v1h-1zM229 186h1v1h-1zM226 187h3v1h-3zM331 182h3v1h-3zM330 183h1v1h-1zM334 183h1v1h-1zM330 184h5v1h-5zM330 185h1v1h-1zM330 186h1v1h-1zM334 186h1v1h-1zM331 187h3v1h-3zM434 179h5v1h-5zM434 180h1v1h-1zM434 181h1v1h-1zM434 182h1v1h-1zM434 183h4v1h-4zM438 184h1v1h-1zM438 185h1v1h-1zM433 186h1v1h-1zM438 186h1v1h-1zM434 187h4v1h-4zM542 179h2v1h-2zM543 180h1v1h-1zM543 181h1v1h-1zM540 182h4v1h-4zM539 183h1v1h-1zM543 183h1v1h-1zM539 184h1v1h-1zM543 184h1v1h-1zM539 185h1v1h-1zM543 185h1v1h-1zM539 186h1v1h-1zM543 186h1v1h-1zM540 187h3v1h-3zM544 187h1v1h-1zM642 179h2v1h-2zM643 180h1v1h-1zM643 181h1v1h-1zM643 182h4v1h-4zM643 183h1v1h-1zM647 183h1v1h-1zM643 184h1v1h-1zM647 184h1v1h-1zM643 185h1v1h-1zM647 185h1v1h-1zM643 186h1v1h-1zM647 186h1v1h-1zM642 187h1v1h-1zM644 187h3v1h-3zM749 179h3v1h-3zM748 180h1v1h-1zM752 180h1v1h-1zM748 181h1v1h-1zM752 181h1v1h-1zM748 182h1v1h-1zM752 182h1v1h-1zM749 183h3v1h-3zM748 184h1v1h-1zM752 184h1v1h-1zM748 185h1v1h-1zM752 185h1v1h-1zM748 186h1v1h-1zM752 186h1v1h-1zM749 187h3v1h-3zM853 179h3v1h-3zM852 180h1v1h-1zM856 180h1v1h-1zM852 181h1v1h-1zM856 181h1v1h-1zM852 182h1v1h-1zM856 182h1v1h-1zM852 183h1v1h-1zM856 183h1v1h-1zM853 184h4v1h-4zM856 185h1v1h-1zM855 186h1v1h-1zM852 187h3v1h-3zM962 179h3v1h-3zM961 180h1v1h-1zM965 180h1v1h-1zM965 181h1v1h-1zM965 182h1v1h-1zM963 183h2v1h-2zM965 184h1v1h-1zM965 185h1v1h-1zM961 186h1v1h-1zM965 186h1v1h-1zM962 187h3v1h-3zM159 121h3v1h-3zM158 122h1v1h-1zM162 122h1v1h-1zM158 123h1v1h-1zM162 123h1v1h-1zM158 124h1v1h-1zM162 124h1v1h-1zM158 125h1v1h-1zM162 125h1v1h-1zM158 126h1v1h-1zM162 126h1v1h-1zM158 127h1v1h-1zM162 127h1v1h-1zM158 128h1v1h-1zM162 128h1v1h-1zM159 129h3v1h-3zM124 141h3v1h-3zM123 142h1v1h-1zM127 142h1v1h-1zM123 143h1v1h-1zM127 143h1v1h-1zM123 144h1v1h-1zM127 144h1v1h-1zM123 145h1v1h-1zM127 145h1v1h-1zM123 146h1v1h-1zM127 146h1v1h-1zM123 147h1v1h-1zM127 147h1v1h-1zM123 148h1v1h-1zM127 148h1v1h-1zM124 149h3v1h-3zM137 146h5v1h-5zM145 143h1v1h-1zM146 144h1v1h-1zM147 145h1v1h-1zM148 146h1v1h-1zM147 147h1v1h-1zM146 148h1v1h-1zM145 149h1v1h-1zM160 141h3v1h-3zM159 142h1v1h-1zM159 143h1v1h-1zM158 144h5v1h-5zM159 145h1v1h-1zM159 146h1v1h-1zM159 147h1v1h-1zM159 148h1v1h-1zM158 149h4v1h-4zM124 161h3v1h-3zM123 162h1v1h-1zM127 162h1v1h-1zM123 163h1v1h-1zM127 163h1v1h-1zM123 164h1v1h-1zM127 164h1v1h-1zM123 165h1v1h-1zM127 165h1v1h-1zM123 166h1v1h-1zM127 166h1v1h-1zM123 167h1v1h-1zM127 167h1v1h-1zM123 168h1v1h-1zM127 168h1v1h-1zM124 169h3v1h-3zM137 166h5v1h-5zM145 163h1v1h-1zM146 164h1v1h-1zM147 165h1v1h-1zM148 166h1v1h-1zM147 167h1v1h-1zM146 168h1v1h-1zM145 169h1v1h-1zM160 161h3v1h-3zM159 162h1v1h-1zM159 163h1v1h-1zM158 164h5v1h-5zM159 165h1v1h-1zM159 166h1v1h-1zM159 167h1v1h-1zM159 168h1v1h-1zM158 169h4v1h-4zM124 181h3v1h-3zM123 182h1v1h-1zM127 182h1v1h-1zM123 183h1v1h-1zM127 183h1v1h-1zM123 184h1v1h-1zM127 184h1v1h-1zM123 185h1v1h-1zM127 185h1v1h-1zM123 186h1v1h-1zM127 186h1v1h-1zM123 187h1v1h-1zM127 187h1v1h-1zM123 188h1v1h-1zM127 188h1v1h-1zM124 189h3v1h-3zM137 186h5v1h-5zM145 183h1v1h-1zM146 184h1v1h-1zM147 185h1v1h-1zM148 186h1v1h-1zM147 187h1v1h-1zM146 188h1v1h-1zM145 189h1v1h-1zM159 184h3v1h-3zM158 185h1v1h-1zM162 185h1v1h-1zM158 186h5v1h-5zM158 187h1v1h-1zM158 188h1v1h-1zM162 188h1v1h-1zM159 189h3v1h-3zM124 201h3v1h-3zM123 202h1v1h-1zM127 202h1v1h-1zM123 203h1v1h-1zM127 203h1v1h-1zM123 204h1v1h-1zM127 204h1v1h-1zM123 205h1v1h-1zM127 205h1v1h-1zM123 206h1v1h-1zM127 206h1v1h-1zM123 207h1v1h-1zM127 207h1v1h-1zM123 208h1v1h-1zM127 208h1v1h-1zM124 209h3v1h-3zM137 206h5v1h-5zM145 203h1v1h-1zM146 204h1v1h-1zM147 205h1v1h-1zM148 206h1v1h-1zM147 207h1v1h-1zM146 208h1v1h-1zM145 209h1v1h-1zM160 201h1v1h-1zM158 202h3v1h-3zM160 203h1v1h-1zM160 204h1v1h-1zM160 205h1v1h-1zM160 206h1v1h-1zM160 207h1v1h-1zM160 208h1v1h-1zM158 209h5v1h-5zM70 123h3v1h-3zM69 124h1v1h-1zM73 124h1v1h-1zM69 125h1v1h-1zM69 126h1v1h-1zM69 127h1v1h-1zM73 127h1v1h-1zM70 128h3v1h-3zM78 120h1v1h-1zM76 123h3v1h-3zM78 124h1v1h-1zM78 125h1v1h-1zM78 126h1v1h-1zM78 127h1v1h-1zM76 128h5v1h-5zM41 143h4v1h-4zM45 144h1v1h-1zM42 145h4v1h-4zM41 146h1v1h-1zM45 146h1v1h-1zM41 147h1v1h-1zM45 147h1v1h-1zM42 148h3v1h-3zM46 148h1v1h-1zM50 140h2v1h-2zM50 141h1v1h-1zM50 142h1v1h-1zM50 143h1v1h-1zM50 144h1v1h-1zM50 145h1v1h-1zM50 146h1v1h-1zM50 147h1v1h-1zM50 148h1v1h-1zM50 149h1v1h-1zM50 150h2v1h-2zM56 140h3v1h-3zM55 141h1v1h-1zM59 141h1v1h-1zM59 142h1v1h-1zM59 143h1v1h-1zM57 144h2v1h-2zM59 145h1v1h-1zM59 146h1v1h-1zM55 147h1v1h-1zM59 147h1v1h-1zM56 148h3v1h-3zM64 144h1v1h-1zM64 148h1v1h-1zM70 140h3v1h-3zM69 141h1v1h-1zM73 141h1v1h-1zM69 142h1v1h-1zM73 142h1v1h-1zM69 143h1v1h-1zM73 143h1v1h-1zM69 144h1v1h-1zM73 144h1v1h-1zM69 145h1v1h-1zM73 145h1v1h-1zM69 146h1v1h-1zM73 146h1v1h-1zM69 147h1v1h-1zM73 147h1v1h-1zM70 148h3v1h-3zM77 140h2v1h-2zM78 141h1v1h-1zM78 142h1v1h-1zM78 143h1v1h-1zM78 144h1v1h-1zM78 145h1v1h-1zM78 146h1v1h-1zM78 147h1v1h-1zM78 148h1v1h-1zM78 149h1v1h-1zM77 150h2v1h-2zM40 160h2v1h-2zM41 161h1v1h-1zM41 162h1v1h-1zM41 163h4v1h-4zM41 164h1v1h-1zM45 164h1v1h-1zM41 165h1v1h-1zM45 165h1v1h-1zM41 166h1v1h-1zM45 166h1v1h-1zM41 167h1v1h-1zM45 167h1v1h-1zM40 168h1v1h-1zM42 168h3v1h-3zM50 160h2v1h-2zM50 161h1v1h-1zM50 162h1v1h-1zM50 163h1v1h-1zM50 164h1v1h-1zM50 165h1v1h-1zM50 166h1v1h-1zM50 167h1v1h-1zM50 168h1v1h-1zM50 169h1v1h-1zM50 170h2v1h-2zM56 160h3v1h-3zM55 161h1v1h-1zM59 161h1v1h-1zM59 162h1v1h-1zM59 163h1v1h-1zM57 164h2v1h-2zM59 165h1v1h-1zM59 166h1v1h-1zM55 167h1v1h-1zM59 167h1v1h-1zM56 168h3v1h-3zM64 164h1v1h-1zM64 168h1v1h-1zM70 160h3v1h-3zM69 161h1v1h-1zM73 161h1v1h-1zM69 162h1v1h-1zM73 162h1v1h-1zM69 163h1v1h-1zM73 163h1v1h-1zM69 164h1v1h-1zM73 164h1v1h-1zM69 165h1v1h-1zM73 165h1v1h-1zM69 166h1v1h-1zM73 166h1v1h-1zM69 167h1v1h-1zM73 167h1v1h-1zM70 168h3v1h-3zM77 160h2v1h-2zM78 161h1v1h-1zM78 162h1v1h-1zM78 163h1v1h-1zM78 164h1v1h-1zM78 165h1v1h-1zM78 166h1v1h-1zM78 167h1v1h-1zM78 168h1v1h-1zM78 169h1v1h-1zM77 170h2v1h-2zM42 183h3v1h-3zM41 184h1v1h-1zM45 184h1v1h-1zM42 185h3v1h-3zM45 186h1v1h-1zM41 187h1v1h-1zM45 187h1v1h-1zM42 188h3v1h-3zM50 180h2v1h-2zM50 181h1v1h-1zM50 182h1v1h-1zM50 183h1v1h-1zM50 184h1v1h-1zM50 185h1v1h-1zM50 186h1v1h-1zM50 187h1v1h-1zM50 188h1v1h-1zM50 189h1v1h-1zM50 190h2v1h-2zM56 180h3v1h-3zM55 181h1v1h-1zM59 181h1v1h-1zM59 182h1v1h-1zM59 183h1v1h-1zM57 184h2v1h-2zM59 185h1v1h-1zM59 186h1v1h-1zM55 187h1v1h-1zM59 187h1v1h-1zM56 188h3v1h-3zM64 184h1v1h-1zM64 188h1v1h-1zM70 180h3v1h-3zM69 181h1v1h-1zM73 181h1v1h-1zM69 182h1v1h-1zM73 182h1v1h-1zM69 183h1v1h-1zM73 183h1v1h-1zM69 184h1v1h-1zM73 184h1v1h-1zM69 185h1v1h-1zM73 185h1v1h-1zM69 186h1v1h-1zM73 186h1v1h-1zM69 187h1v1h-1zM73 187h1v1h-1zM70 188h3v1h-3zM77 180h2v1h-2zM78 181h1v1h-1zM78 182h1v1h-1zM78 183h1v1h-1zM78 184h1v1h-1zM78 185h1v1h-1zM78 186h1v1h-1zM78 187h1v1h-1zM78 188h1v1h-1zM78 189h1v1h-1zM77 190h2v1h-2z"/><path fill="#00ff00" d="M9 103h5v1h-5zM9 104h5v1h-5zM9 106h5v1h-5zM9 107h5v1h-5zM22 101h3v1h-3zM21 102h1v1h-1zM25 102h1v1h-1zM21 103h1v1h-1zM25 103h1v1h-1zM21 104h1v1h-1zM21 105h1v1h-1zM24 105h2v1h-2zM21 106h1v1h-1zM25 106h1v1h-1zM21 107h1v1h-1zM25 107h1v1h-1zM22 108h3v1h-3zM30 100h1v1h-1zM28 101h3v1h-3zM30 102h1v1h-1zM30 103h1v1h-1zM30 104h1v1h-1zM30 105h1v1h-1zM30 106h1v1h-1zM30 107h1v1h-1zM28 108h5v1h-5zM22 220h3v1h-3zM21 221h1v1h-1zM25 221h1v1h-1zM21 222h1v1h-1zM25 222h1v1h-1zM21 223h1v1h-1zM21 224h1v1h-1zM24 224h2v1h-2zM21 225h1v1h-1zM25 225h1v1h-1zM21 226h1v1h-1zM25 226h1v1h-1zM22 227h3v1h-3zM29 219h3v1h-3zM28 220h1v1h-1zM32 220h1v1h-1zM28 221h1v1h-1zM32 221h1v1h-1zM28 222h1v1h-1zM32 222h1v1h-1zM31 223h1v1h-1zM30 224h1v1h-1zM29 225h1v1h-1zM28 226h1v1h-1zM32 226h1v1h-1zM28 227h5v1h-5z"/><path fill="#000000" d="M70 203h3v1h-3zM69 204h1v1h-1zM73 204h1v1h-1zM69 205h1v1h-1zM69 206h1v1h-1zM69 207h1v1h-1zM73 207h1v1h-1zM70 208h3v1h-3zM77 203h3v1h-3zM76 204h1v1h-1zM80 204h1v1h-1zM76 205h1v1h-1zM80 205h1v1h-1zM76 206h1v1h-1zM80 206h1v1h-1zM76 207h1v1h-1zM80 207h1v1h-1zM77 208h3v1h-3z"/></svg>
</body></html>
